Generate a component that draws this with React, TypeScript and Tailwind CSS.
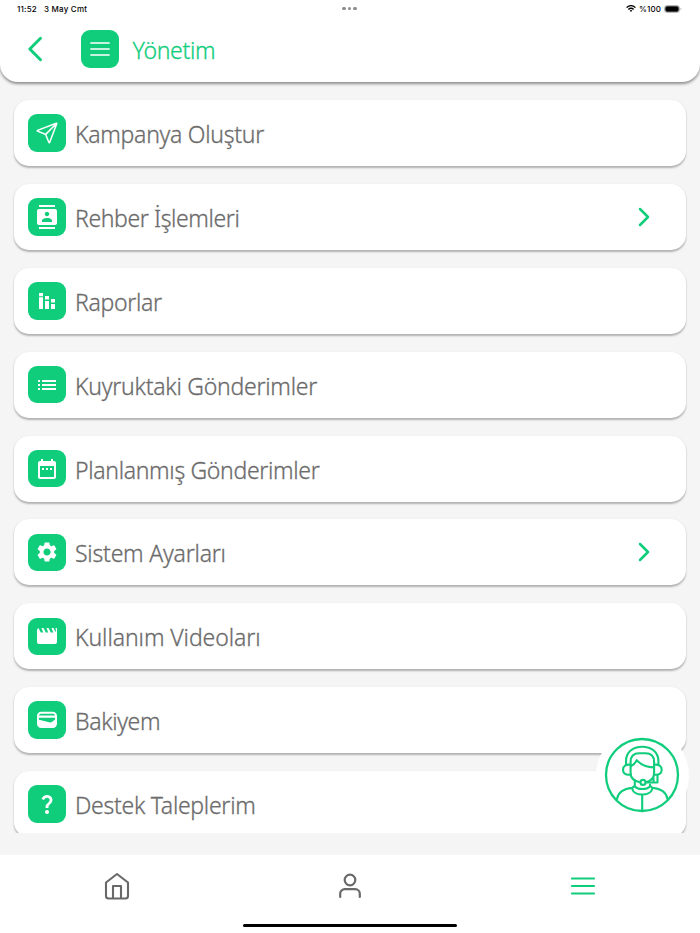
import React from 'react';
import { IoPaperPlaneOutline } from 'react-icons/io5';
import {
  MdContacts,
  MdDateRange,
  MdList,
  MdQuestionMark,
  MdSettings,
} from 'react-icons/md';

const BarsIcon = () => (
  <svg width="24" height="24" viewBox="0 0 24 24" fill="currentColor">
    <path d="M4 4h4v3.2H4zM4 8.3h4V20H4zM10 7h4v3.6h-4zM10 12h4v8h-4zM16 10h4v3.4h-4zM16 15h4v5h-4z" />
  </svg>
);

const WalletIcon = () => (
  <svg width="24" height="24" viewBox="0 0 24 24">
    <rect x="2" y="3.8" width="20" height="16.200" rx="4.200" fill="currentColor" />
    <path d="M4 7.200c.4-1 1.300-1.500 2.400-1.500h11.200c1.100 0 2 .5 2.400 1.500v.4H4zM4 9.800h16v1.600l-3.200 2.700c-.5.4-1.100.5-1.700.4L4 11.800z" fill="#10cd7c" />
  </svg>
);

const ClapperIcon = () => (
  <svg width="24" height="24" viewBox="0 0 24 24" fill="currentColor">
    <path d="M3.500 4l2.300 4.600h2.400L6.500 4h2l2.300 4.600h2.400L11.500 4h2l2.300 4.600h2.400L16.500 4h2l1.600 3.600h.9L20.500 4H22v14a2 2 0 0 1-2 2H4a2 2 0 0 1-2-2V5.500z" />
  </svg>
);

interface MenuItem {
  label: string;
  icon: React.ReactNode;
  tracking: string;
  hasChildren?: boolean;
}

const items: MenuItem[] = [
  { label: 'Kampanya Oluştur', icon: <IoPaperPlaneOutline size={24} className="stroke-current stroke-[20px]" />, tracking: 'tracking-[-0.28px]' },
  { label: 'Rehber İşlemleri', icon: <MdContacts size={24} />, tracking: 'tracking-[-0.4px]', hasChildren: true },
  { label: 'Raporlar', icon: <BarsIcon />, tracking: 'tracking-[-0.3px]' },
  { label: 'Kuyruktaki Gönderimler', icon: <MdList size={24} />, tracking: 'tracking-[-0.25px]' },
  { label: 'Planlanmış Gönderimler', icon: <MdDateRange size={24} />, tracking: 'tracking-[-0.32px]' },
  { label: 'Sistem Ayarları', icon: <MdSettings size={24} />, tracking: 'tracking-[-0.22px]', hasChildren: true },
  { label: 'Kullanım Videoları', icon: <ClapperIcon />, tracking: 'tracking-[-0.07px]' },
  { label: 'Bakiyem', icon: <WalletIcon />, tracking: 'tracking-[-0.35px]' },
  { label: 'Destek Taleplerim', icon: <MdQuestionMark size={24} />, tracking: 'tracking-[-0.28px]' },
];

const StatusBar = () => (
  <div className="grid h-[17px] grid-cols-3 items-center pr-[18px] pl-[17px] font-['Inter',sans-serif] text-[8px] leading-none font-medium text-black">
    <div className="flex gap-[7px] tracking-[0.21px]">
      <span>11:52</span>
      <span>3 May Cmt</span>
    </div>
    <div className="flex justify-center gap-[1.600px]">
      <i className="size-[3.700px] rounded-full bg-[#8c8c8c]" />
      <i className="size-[3.700px] rounded-full bg-[#8c8c8c]" />
      <i className="size-[3.700px] rounded-full bg-[#8c8c8c]" />
    </div>
    <div className="flex items-center justify-end gap-[3px]">
      <svg width="10" height="7" viewBox="0 0 10 7" fill="none" stroke="currentColor" strokeWidth="1.4">
        <path d="M.6 2.600C3 0 7 0 9.400 2.600M2.400 4.400c1.500-1.500 3.700-1.500 5.200 0" />
        <path d="M3.700 5.500c.8-.7 1.800-.7 2.600 0L5 7z" fill="currentColor" stroke="none" />
      </svg>
      <span className="tracking-[0.1px]">%100</span>
      <svg width="18" height="8" viewBox="0 0 18 8">
        <rect x=".5" y=".5" width="15" height="7" rx="2.300" fill="none" stroke="#b5b5b5" />
        <rect x="1.300" y="1.300" width="13.400" height="5.400" rx="1.600" />
        <path d="M16.600 2.800c1 .4 1 2 0 2.400z" fill="#999" />
      </svg>
    </div>
  </div>
);

const Header = () => (
  <header className="relative z-10 h-[82px] shrink-0 rounded-b-[18px] bg-white shadow-[0_1.5px_3px_rgba(0,0,0,0.42)]">
    <StatusBar />
    <div className="flex h-[64px] items-center pl-[27px] text-[#10cd7c]">
      <svg width="16" height="26" viewBox="0 0 16 26" fill="none" stroke="currentColor" strokeWidth="3" strokeLinecap="round" strokeLinejoin="round">
        <path d="M13.500 2.300 2.800 13l10.700 10.700" />
      </svg>
      <div className="ml-[38px] flex size-[37.500px] items-center justify-center rounded-[9px] bg-[#10cd7c] text-white">
        <svg width="20" height="14" viewBox="0 0 20 14" stroke="currentColor" strokeWidth="1.700" strokeLinecap="round">
          <path d="M1 1h18M1 7h18M1 13h18" />
        </svg>
      </div>
      <h1 className="ml-[14px] pt-[2px] text-[23px] leading-none font-light tracking-[-0.3px] [-webkit-text-stroke:0.3px]">Yönetim</h1>
    </div>
  </header>
);

const MenuRow = ({ item }: { item: MenuItem }) => (
  <li className="flex h-[66px] shrink-0 items-center rounded-[15px] bg-white pr-[36px] pl-[14px] shadow-[0_1.5px_2px_rgba(0,0,0,0.28)]">
    <div className="flex size-[37.500px] items-center justify-center rounded-[9px] bg-[#10cd7c] text-white">
      {item.icon}
    </div>
    <span className={`ml-[9.500px] pt-[3px] text-[23px] leading-none font-light whitespace-nowrap text-[#6b6b6b] [-webkit-text-stroke:0.3px] ${item.tracking}`}>
      {item.label}
    </span>
    {item.hasChildren && (
      <svg className="ml-auto" width="12" height="20" viewBox="0 0 12 20" fill="none" stroke="#10cd7c" strokeWidth="2.500" strokeLinecap="round" strokeLinejoin="round">
        <path d="M2 2l8 8-8 8" />
      </svg>
    )}
  </li>
);

const SupportButton = () => (
  <button className="absolute top-[728.500px] left-[595.500px] z-20 flex size-[93px] items-center justify-center rounded-full bg-white">
    <svg width="76" height="76" viewBox="0 0 76 76" fill="none" stroke="#10cd7c" strokeWidth="2.100" strokeLinejoin="round" strokeLinecap="round">
      <circle cx="38" cy="38" r="36" strokeWidth="2.300" />
      {/* headset band and ear cups */}
      <path d="M22 27.500V24c0-9 7-14.300 16.200-14.300S54.400 15 54.400 24v3.500" />
      <path d="M26.500 27.800c-4.500-.9-7.500 1.200-7.500 4.900s3 5.800 7.500 4.800M50.200 27.800c4.500-.9 7.500 1.200 7.500 4.900s-3 5.800-7.500 4.800" />
      {/* face and hair */}
      <path d="M36 45.200c-5.500-1-9.400-4.200-9.400-9.200V25c0-5.500 3-8.700 8.500-8.700h6.500c5.500 0 8.500 3.200 8.500 8.700v11c0 5-3.200 8-8.100 9.200" />
      <path d="M26.800 29.200c2.700-1.200 4.700-3.200 5.900-6.100 4.500 4.900 10 7.300 17.400 7.300" />
      {/* microphone */}
      <path d="M42 45.500h11.500v-7.300M49.500 41v4" />
      <circle cx="39" cy="45.400" r="2.500" />
      {/* collar, shoulders and zip */}
      <path d="M30.800 43.500v5l-2.300 2.300c-9 1-14.500 4.700-15.500 11.200M46 47.500v1l2.300 2.300c9 1 14.200 4.700 15.200 11.200" />
      <path d="M30.800 49.500c3.500 3.400 11.700 3.400 15.200 0M28 51.500c2 8 18.500 8 20.500 0M38.200 57.500V74" />
    </svg>
  </button>
);

const BottomNav = () => (
  <nav className="flex h-[78px] shrink-0 flex-col items-center bg-white">
    <div className="grid h-[62px] w-full grid-cols-3 place-items-center text-[#696969]">
      <button>
        <svg width="26" height="28" viewBox="0 0 26 28" fill="none" stroke="currentColor" strokeWidth="2.100" strokeLinejoin="round">
          <path d="M2 10.500 13 2l11 8.500V24a2.500 2.500 0 0 1-2.500 2.500h-17A2.500 2.500 0 0 1 2 24zM9 26.500V14h8v12.500" />
        </svg>
      </button>
      <button>
        <svg width="24" height="26" viewBox="0 0 24 26" fill="none" stroke="currentColor" strokeWidth="2.200" strokeLinecap="round">
          <circle cx="12" cy="7" r="5.300" />
          <path d="M2.200 24v-3.300a4.500 4.500 0 0 1 4.500-4.500h10.600a4.500 4.500 0 0 1 4.500 4.500V24" />
        </svg>
      </button>
      <button>
        <svg width="26" height="18" viewBox="0 0 26 18" stroke="#10cd7c" strokeWidth="2.200" strokeLinecap="round">
          <path d="M2 1.500h22M2 9h22M2 16.500h22" />
        </svg>
      </button>
    </div>
    <div className="mt-[6.500px] h-[3.500px] w-[214px] rounded-full bg-black" />
  </nav>
);

const App: React.FC = () => {
  return (
    <div className="relative flex h-[933px] w-[700px] flex-col overflow-hidden bg-[#f5f5f5] font-['Noto_Sans',sans-serif]">
      <Header />
      <ul className="flex h-[751px] shrink-0 flex-col gap-[17.900px] overflow-hidden px-[14px] pt-[18px]">
        {items.map(item => (
          <MenuRow key={item.label} item={item} />
        ))}
      </ul>
      <div className="h-[22px] shrink-0" />
      <BottomNav />
      <SupportButton />
    </div>
  );
};

export default App;
